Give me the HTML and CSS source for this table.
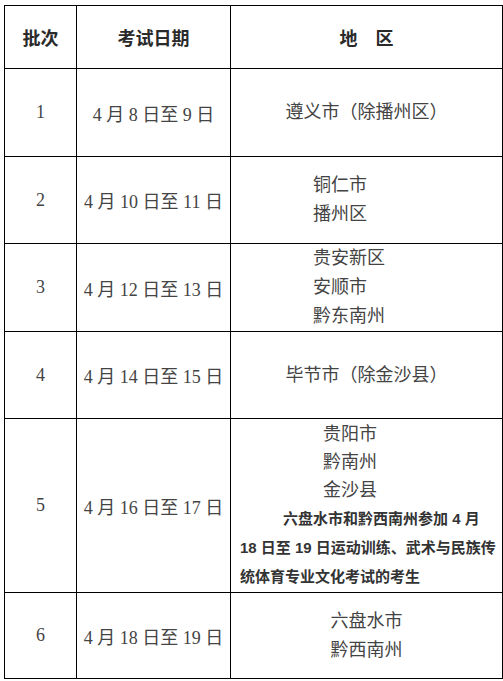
FILE: index.html
```html
<!DOCTYPE html>
<html lang="zh">
<head>
<meta charset="utf-8">
<link rel="stylesheet" href="styles.css">
</head>
<body>
<table class="sched">
  <colgroup>
    <col class="c1"><col class="c2"><col class="c3">
  </colgroup>
  <tr class="head">
    <th>批次</th>
    <th>考试日期</th>
    <th>地&emsp;区</th>
  </tr>
  <tr class="r1">
    <td class="num">1</td>
    <td class="date">4 月 8 日至 9 日</td>
    <td class="area">遵义市（除播州区）</td>
  </tr>
  <tr class="r2">
    <td class="num">2</td>
    <td class="date">4 月 10 日至 11 日</td>
    <td class="area"><div class="list ind-a">铜仁市<br>播州区</div></td>
  </tr>
  <tr class="r3">
    <td class="num">3</td>
    <td class="date">4 月 12 日至 13 日</td>
    <td class="area"><div class="list ind-a">贵安新区<br>安顺市<br>黔东南州</div></td>
  </tr>
  <tr class="r4">
    <td class="num">4</td>
    <td class="date">4 月 14 日至 15 日</td>
    <td class="area">毕节市（除金沙县）</td>
  </tr>
  <tr class="r5">
    <td class="num">5</td>
    <td class="date">4 月 16 日至 17 日</td>
    <td class="area">
      <div class="list ind-b">贵阳市<br>黔南州<br>金沙县</div>
      <p class="note">六盘水市和黔西南州参加 4 月<br>18 日至 19 日运动训练、武术与民族传<br>统体育专业文化考试的考生</p>
    </td>
  </tr>
  <tr class="r6">
    <td class="num">6</td>
    <td class="date">4 月 18 日至 19 日</td>
    <td class="area"><div class="list">六盘水市<br>黔西南州</div></td>
  </tr>
</table>
</body>
</html>
```
FILE: styles.css
```css
html, body {
  margin: 0;
  padding: 0;
  background: #ffffff;
}
body {
  padding: 5px 0 0 4px;
}
.sched {
  border-collapse: collapse;
  width: 498px;
  table-layout: fixed;
  font-family: "Liberation Serif", "Noto Sans CJK SC", serif;
  color: #444444;
}
.c1 { width: 72px; }
.c2 { width: 154px; }
.c3 { width: 272px; }
.sched th, .sched td {
  border: 1px solid #000000;
  padding: 0;
  text-align: center;
  vertical-align: middle;
  font-size: 18px;
  font-weight: 400;
}
.sched th {
  font-family: "Noto Sans CJK SC", sans-serif;
  font-weight: 700;
  color: #2a2a2a;
  font-size: 18px;
}
.head { height: 63px; }
.r1 { height: 88px; }
.r2 { height: 87px; }
.r3 { height: 88px; }
.r4 { height: 87px; }
.r5 { height: 174px; }
.r6 { height: 86px; }
.num {
  font-family: "Liberation Serif", serif;
}
.area {
  line-height: 29px;
}
.list {
  display: inline-block;
  text-align: left;
  line-height: 29px;
}
.list.ind-a {
  display: block;
  padding-left: 82px;
}
.list.ind-b {
  display: block;
  padding-left: 92px;
  line-height: 28px;
}
.note {
  margin: 0;
  padding: 0 0 0 9px;
  text-align: left;
  text-indent: 43px;
  font-family: "Liberation Sans", "Noto Sans CJK SC", sans-serif;
  font-weight: 700;
  font-size: 15px;
  line-height: 29px;
  color: #333333;
  white-space: nowrap;
}
```
